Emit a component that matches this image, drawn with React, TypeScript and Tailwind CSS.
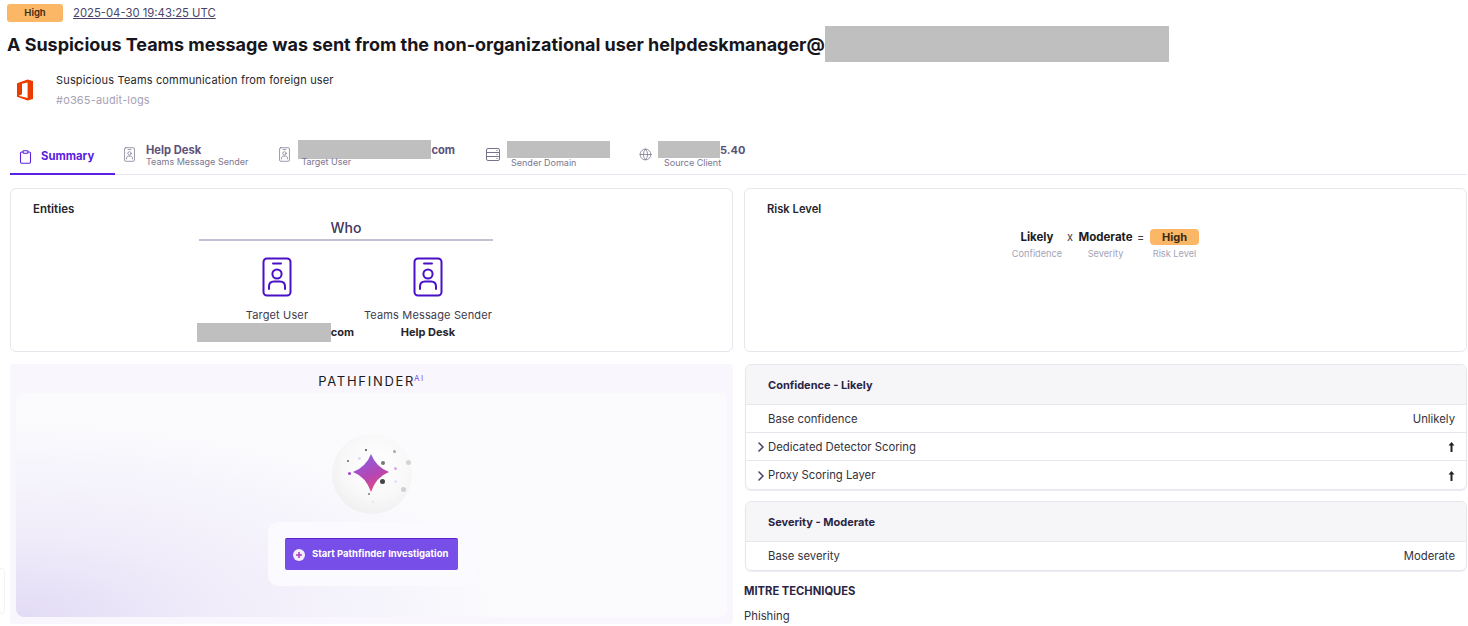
import { ChevronRight, Clipboard, Globe } from 'lucide-react';

function BadgeIcon({ className }: { className: string }) {
  return (
    <svg className={className} viewBox="0 0 30 40" fill="none" stroke="currentColor" strokeLinecap="round">
      <rect x="1.5" y="1.5" width="27" height="37" rx="3.5" strokeWidth="2" />
      <path d="M11 6.5h8" strokeWidth="2" />
      <circle cx="15" cy="17" r="4.6" strokeWidth="2" />
      <path d="M7 32v-2.5c0-3 2-5 5-5h6c3 0 5 2 5 5V32" strokeWidth="2" />
    </svg>
  );
}

function ServerIcon() {
  return (
    <svg className="w-[14px] h-[13px] text-[#77738c]" viewBox="0 0 14 13" fill="none" stroke="currentColor" strokeWidth="1">
      <rect x="0.5" y="0.5" width="13" height="12" rx="1.5" />
      <path d="M.5 4.5h13M.5 8.5h13M10.5 2.5h1M10.5 6.5h1M10.5 10.5h1" />
    </svg>
  );
}

function OfficeIcon() {
  return (
    <svg className="w-[20px] h-[24px]" viewBox="0 0 20 24">
      <path
        fillRule="evenodd"
        fill="#eb3c00"
        d="M2 5.2 12.6 1.5 18 3v18l-5.4 1.6L2 18.8ZM12.6 4.4 7 5.7v10.6l-3.4 1.4 9 2.2Z"
      />
    </svg>
  );
}

function UpArrow() {
  return (
    <svg className="w-[7px] h-[10px]" viewBox="0 0 7 10" fill="#222">
      <path d="M3.5 0 6.5 3.4H4.5V10h-2V3.4H.5Z" />
    </svg>
  );
}

function Redacted({ className }: { className: string }) {
  return <span className={`inline-block bg-[#bfbfbf] ${className}`} />;
}

function Tab({
  icon,
  title,
  label,
  className,
  labelClass = '',
}: {
  icon: React.ReactNode;
  title: React.ReactNode;
  label: string;
  className: string;
  labelClass?: string;
}) {
  return (
    <div className={`flex items-center mb-[2px] ${className}`}>
      {icon}
      <div className="flex flex-col">
        <div className="flex items-center h-[15px] pt-[2px] text-[11.2px] font-bold text-[#5b5278] leading-none">{title}</div>
        <div className={`-mt-[1px] text-[9px] leading-[10px] text-[#7c7791] ${labelClass}`}>{label}</div>
      </div>
    </div>
  );
}

function Row({
  label,
  value,
  expandable,
  className,
}: {
  label: string;
  value: React.ReactNode;
  expandable?: boolean;
  className: string;
}) {
  return (
    <div className={`flex items-center justify-between pl-[22px] pr-[11px] border-t border-[#e6e6ee] text-[11.3px] text-[#33313c] relative ${className}`}>
      {expandable && <ChevronRight className="absolute left-[7px] w-[16px] h-[16px] text-[#4b4468]" strokeWidth={2.4} />}
      <span>{label}</span>
      {value}
    </div>
  );
}

function Spark() {
  const dots = [
    ['left-[33px] top-[15px]', 'w-[2px] h-[2px] bg-[#444]'],
    ['left-[61px] top-[16px]', 'w-[3px] h-[3px] bg-[#aaa]'],
    ['left-[15px] top-[26px]', 'w-[2px] h-[2px] bg-[#666]'],
    ['left-[26px] top-[23px]', 'w-[3px] h-[3px] bg-[#e4d4f4]'],
    ['left-[49px] top-[27px]', 'w-[4px] h-[4px] bg-[#777]'],
    ['left-[74px] top-[26px]', 'w-[5px] h-[5px] bg-[#d4d4d4]'],
    ['left-[62px] top-[33px]', 'w-[3px] h-[3px] bg-[#d7a8e4]'],
    ['left-[16px] top-[38px]', 'w-[3px] h-[3px] bg-[#a83ed8]'],
    ['left-[48px] top-[45px]', 'w-[5px] h-[5px] bg-[#444]'],
    ['left-[62px] top-[46px]', 'w-[3px] h-[3px] bg-[#eadff6]'],
    ['left-[69px] top-[53px]', 'w-[5px] h-[5px] bg-[#cfcfcf]'],
    ['left-[36px] top-[59px]', 'w-[2px] h-[2px] bg-[#777]'],
    ['left-[40px] top-[67px]', 'w-[2px] h-[2px] bg-[#e4dcec]'],
  ];
  return (
    <div className="relative w-[80px] h-[80px] rounded-full bg-[radial-gradient(circle_at_55%_40%,#ffffff_0%,#f8f8f8_50%,#e9e9e9_100%)]">
      {dots.map(([pos, look], i) => (
        <span key={i} className={`absolute rounded-full ${pos} ${look}`} />
      ))}
      <svg className="absolute left-[21px] top-[20px] w-[36px] h-[38px]" viewBox="0 0 36 38">
        <defs>
          <linearGradient id="star" x1="0.3" y1="0" x2="0.7" y2="1">
            <stop offset="0" stopColor="#8a5ee0" />
            <stop offset="0.55" stopColor="#b546b4" />
            <stop offset="1" stopColor="#e64a7a" />
          </linearGradient>
        </defs>
        <path d="M18 0Q23 13 36 18 23 23 18 38 13 23 0 18 13 13 18 0Z" fill="url(#star)" />
      </svg>
    </div>
  );
}

export default function App() {
  return (
    <div className="relative w-[1468px] h-[626px] overflow-hidden bg-white font-['Inter',sans-serif] text-[#1c1b22]">
      {/* Header */}
      <div className="flex items-center gap-[10px] pl-[7px] pt-[4px]">
        <span className="flex items-center justify-center w-[56px] h-[18px] rounded-[3px] bg-[#fbb766] text-[9.5px] font-semibold text-[#3a2a14]">
          High
        </span>
        <span className="mt-[2px] text-[11.3px] leading-none text-[#4b4468] underline">2025-04-30 19:43:25 UTC</span>
      </div>
      <div className="flex items-center h-[36px] mt-[4px] pl-[7px]">
        <h1 className="pt-[1px] text-[18px] font-bold text-[#17161c] leading-none whitespace-nowrap tracking-[-0.025px]">
          A Suspicious Teams message was sent from the non-organizational user helpdeskmanager@
        </h1>
        <Redacted className="w-[344px] h-[36px]" />
      </div>
      <div className="flex items-center h-[40px] mt-[8px] pl-[15px]">
        <OfficeIcon />
        <div className="ml-[21px] flex flex-col gap-[5px]">
          <div className="text-[11px] leading-[15px] text-[#26252c] tracking-[0.16px]">Suspicious Teams communication from foreign user</div>
          <div className="text-[11px] leading-[15px] text-[#a5a2b6] tracking-[0.16px]">#o365-audit-logs</div>
        </div>
      </div>

      {/* Tabs */}
      <div className="flex items-center h-[38px] mt-[27px] ml-[10px] mr-[1px] border-b border-[#e6e5f0]">
        <div className="flex items-center gap-[8px] w-[105px] h-[38px] pl-[8px] pt-[3px] border-b-2 border-[#5b21e0] -mb-[1px] text-[#5b21e0]">
          <Clipboard className="w-[15px] h-[16px]" strokeWidth={1.7} />
          <span className="text-[11.3px] font-bold">Summary</span>
        </div>
        <Tab
          className="ml-[9px] gap-[11px]"
          icon={<BadgeIcon className="w-[11px] h-[15px] text-[#77738c]" />}
          title="Help Desk"
          label="Teams Message Sender"
        />
        <Tab
          className="ml-[31px] gap-[8px]"
          icon={<BadgeIcon className="w-[11px] h-[15px] text-[#77738c]" />}
          title={
            <>
              <Redacted className="w-[133px] h-[19px] -mt-[4px]" />
              com
            </>
          }
          label="Target User"
          labelClass="pl-[3px]"
        />
        <div className="ml-[31px] mb-[3px] flex items-center gap-[7px]">
          <ServerIcon />
          <div className="flex flex-col">
            <Redacted className="w-[103px] h-[17px]" />
            <div className="pl-[4px] text-[9px] leading-[10px] text-[#7c7791]">Sender Domain</div>
          </div>
        </div>
        <div className="ml-[29px] mb-[3px] flex items-center gap-[6px]">
          <Globe className="w-[13px] h-[13px] text-[#77738c]" strokeWidth={1.4} />
          <div className="flex flex-col">
            <div className="flex items-center h-[17px] text-[11px] font-bold text-[#5b5278] leading-none">
              <Redacted className="w-[62px] h-[17px]" />
              <span className="pt-[2px]">5.40</span>
            </div>
            <div className="pl-[6px] text-[9px] leading-[10px] text-[#7c7791]">Source Client</div>
          </div>
        </div>
      </div>

      {/* Body */}
      <div className="grid grid-cols-[723px_723px] gap-x-[11px] pl-[10px] pt-[13px]">
        <div className="flex flex-col gap-[12px]">
          <div className="relative h-[164px] border border-[#e6e5ec] rounded-[6px] pt-[14px] pl-[22px]">
            <div className="text-[11.5px] font-semibold leading-[13px] text-[#26252c]">Entities</div>
            <div className="absolute left-[188px] top-[30px] w-[294px] border-b-2 border-[#c3c0d4] pb-[3px] text-center text-[14px] font-medium leading-[17px] text-[#3f3560]">
              Who
            </div>
            <div className="absolute left-[187px] top-[68px] flex">
              <div className="flex flex-col items-center w-[158px]">
                <BadgeIcon className="w-[30px] h-[40px] text-[#4a10c8]" />
                <div className="mt-[11px] text-[11px] leading-[14px] text-[#3e3b4c] tracking-[0.15px]">Target User</div>
                <div className="flex items-center h-[19px] mt-[1px] -ml-[3px] text-[11px] font-bold text-[#26252c]">
                  <Redacted className="w-[134px] h-[19px]" />
                  com
                </div>
              </div>
              <div className="flex flex-col items-center w-[128px] ml-[8px]">
                <BadgeIcon className="w-[30px] h-[40px] text-[#4a10c8]" />
                <div className="mt-[11px] text-[11px] leading-[14px] text-[#3e3b4c] tracking-[0.15px] whitespace-nowrap">Teams Message Sender</div>
                <div className="flex items-center h-[19px] mt-[1px] text-[11px] font-bold text-[#26252c]">Help Desk</div>
              </div>
            </div>
          </div>

          <div className="h-[260px] rounded-[4px] bg-[#f9f6fe] px-[6px] flex flex-col">
            <div className="flex items-start justify-center h-[29px] pt-[9px] text-[#1b1b22]">
              <span className="text-[13px] leading-[16px] tracking-[1.7px]">PATHFINDER</span>
              <span className="-ml-[1px] text-[8px] leading-[10px] tracking-[1.5px] text-[#7c4dea]">AI</span>
            </div>
            <div className="flex flex-col items-center h-[224px] pt-[41px] rounded-[8px] bg-[radial-gradient(ellipse_70%_90%_at_0%_100%,#e2dbf5_0%,#f0ecfa_40%,#fbfbfd_100%)]">
              <Spark />
              <div className="mt-[8px] px-[17px] py-[16px] rounded-[10px] bg-[#fbfafe]">
                <button className="flex items-center gap-[7px] w-[173px] h-[32px] pl-[8px] rounded-[2px] bg-[#774ee8] border-t border-[#5b21d0] text-white text-[9.5px] font-bold whitespace-nowrap">
                  <span className="flex items-center justify-center w-[12px] h-[12px] rounded-full bg-[#f3ecfb]">
                    <svg className="w-[6px] h-[6px]" viewBox="0 0 6 6" stroke="#b03cc4" strokeWidth="1.6">
                      <path d="M3 0v6M0 3h6" />
                    </svg>
                  </span>
                  Start Pathfinder Investigation
                </button>
              </div>
            </div>
          </div>
        </div>

        <div className="flex flex-col">
          <div className="relative h-[164px] border border-[#e6e5ec] rounded-[6px] pt-[14px] pl-[22px]">
            <div className="text-[11.2px] font-semibold leading-[13px] text-[#26252c]">Risk Level</div>
            <div className="absolute left-[266px] top-[40px] flex items-start">
              <div className="flex flex-col items-center w-[52px]">
                <span className="h-[16px] text-[11.5px] leading-[16px] font-bold text-[#1c1b22]">Likely</span>
                <span className="mt-[3px] text-[9.2px] leading-[11px] text-[#a5a2b6]">Confidence</span>
              </div>
              <span className="w-[16px] h-[16px] pl-[4px] text-[11px] leading-[16px] text-[#3e3b4c]">x</span>
              <div className="flex flex-col items-center w-[53px]">
                <span className="h-[16px] text-[11.5px] leading-[16px] font-bold text-[#1c1b22]">Moderate</span>
                <span className="mt-[3px] text-[9.2px] leading-[11px] text-[#a5a2b6]">Severity</span>
              </div>
              <span className="w-[18px] h-[16px] pl-[5px] text-[11px] leading-[16px] text-[#3e3b4c]">=</span>
              <div className="flex flex-col items-center w-[49px]">
                <span className="flex items-center justify-center w-[49px] h-[16px] rounded-[4px] bg-[#fbb766] text-[11px] font-bold text-[#3a2a14]">High</span>
                <span className="mt-[3px] text-[9.2px] leading-[11px] text-[#a5a2b6]">Risk Level</span>
              </div>
            </div>
          </div>

          <div className="mt-[12px] ml-[1px] border border-[#e6e6ee] rounded-[6px] overflow-hidden shadow-[0_1px_1px_#ececf2]">
            <div className="flex items-center h-[39px] pl-[22px] pt-[1px] bg-[#f6f6f9] text-[11px] font-bold text-[#2b2545]">Confidence - Likely</div>
            <Row className="h-[28px] pt-[1px]" label="Base confidence" value={<span>Unlikely</span>} />
            <Row className="h-[28px] pt-[1px]" label="Dedicated Detector Scoring" value={<UpArrow />} expandable />
            <Row className="h-[29px] pt-[1px]" label="Proxy Scoring Layer" value={<UpArrow />} expandable />
          </div>

          <div className="mt-[11px] ml-[1px] border border-[#e6e6ee] rounded-[6px] overflow-hidden shadow-[0_1px_1px_#ececf2]">
            <div className="flex items-center h-[39px] pl-[22px] pt-[1px] bg-[#f6f6f9] text-[11px] font-bold text-[#2b2545]">Severity - Moderate</div>
            <Row className="h-[29px]" label="Base severity" value={<span>Moderate</span>} />
          </div>

          <div className="mt-[13px] text-[11.2px] leading-[14px] font-bold text-[#2b2545]">MITRE TECHNIQUES</div>
          <div className="mt-[11px] text-[11.3px] leading-[14px] text-[#33313c]">Phishing</div>
        </div>
      </div>

      {/* Edge of a floating widget */}
      <div className="absolute left-0 top-[568px] w-[5px] h-[46px] rounded-r-[4px] bg-white border border-l-0 border-[#f3f3f3]" />
    </div>
  );
}
